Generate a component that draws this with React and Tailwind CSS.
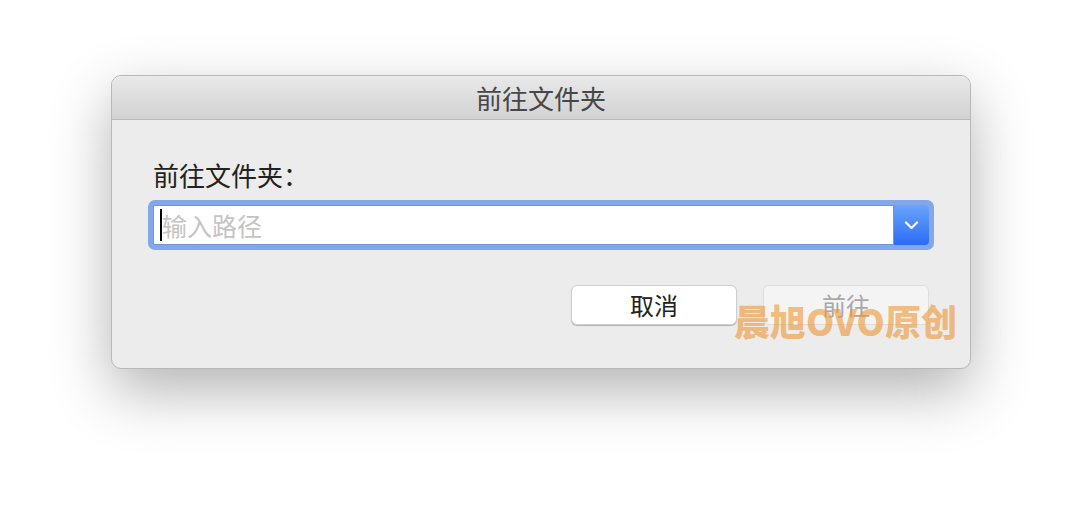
import React from "react";

const FONT = { fontFamily: '"Noto Sans CJK SC", "Noto Sans", sans-serif' };

function ChevronDown() {
  return (
    <svg width="15" height="9" viewBox="0 0 15 9" fill="none">
      <path d="M2 1.5l5.5 5.5 5.5-5.5" stroke="white" strokeWidth="2.2" strokeLinecap="round" strokeLinejoin="round" />
    </svg>
  );
}

export default function App() {
  return (
    <div className="w-[1082px] h-[516px] bg-white pt-[75px] pl-[111px]" style={FONT}>
      <div className="relative w-[860px] h-[294px] rounded-[10px] border border-[#b8b8b8] bg-[#ececec] shadow-[0_22px_60px_rgba(0,0,0,0.3)] overflow-hidden flex flex-col">
        {/* title bar */}
        <div className="h-[44px] shrink-0 bg-gradient-to-b from-[#e9e9e9] to-[#d2d2d2] border-b border-[#b9b9b9] flex items-center justify-center">
          <span className="text-[26px] leading-none text-[#474747]">前往文件夹</span>
        </div>

        {/* body */}
        <div className="flex flex-col px-[36px] pt-[42px]">
          <div className="pl-[5px] text-[26px] leading-none text-[#222]">前往文件夹：</div>

          <div className="mt-[12px] w-[786px] h-[50px] rounded-[7px] bg-[#82a7ea] p-[5px] flex">
            <div className="flex-1 flex items-center bg-white border border-[#6f95dc] pl-[6px]">
              <div className="w-[2px] h-[32px] bg-black" />
              <span className="text-[25px] leading-none text-[#c4c4c4]">输入路径</span>
            </div>
            <div className="w-[35px] rounded-r-[4px] bg-gradient-to-b from-[#6aa4fb] to-[#2c6af4] flex items-center justify-center">
              <ChevronDown />
            </div>
          </div>

          <div className="mt-[35px] flex justify-end gap-[26px] pr-[5px]">
            <button className="w-[166px] h-[40px] rounded-[6px] bg-white border border-[#cfcfcf] shadow-[0_1px_1px_rgba(0,0,0,0.25)] text-[24px] leading-none text-[#222]">
              取消
            </button>
            <button className="w-[166px] h-[40px] rounded-[6px] bg-[#f4f4f4] border border-[#dedede] text-[24px] leading-none text-[#a8a8a8]">
              前往
            </button>
          </div>
        </div>

        {/* watermark */}
        <div className="absolute left-[622px] top-[226px] text-[36px] leading-none font-black text-[rgba(238,150,50,0.62)] whitespace-nowrap">
          晨旭OVO原创
        </div>
      </div>
    </div>
  );
}
